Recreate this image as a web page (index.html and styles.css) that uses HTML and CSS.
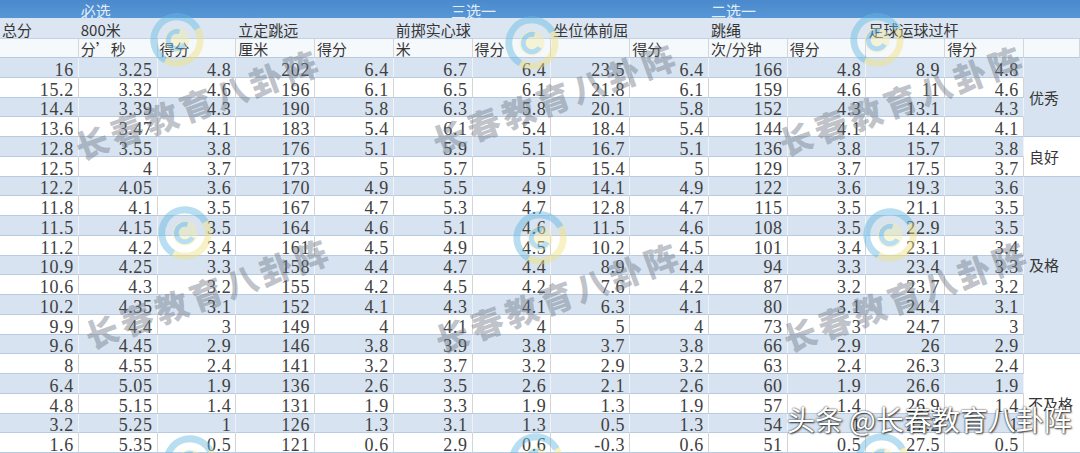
FILE: index.html
```html
<!DOCTYPE html>
<html lang="zh">
<head>
<meta charset="utf-8">
<title>体育评分表</title>
<link rel="stylesheet" href="styles.css">
</head>
<body>
<div class="sheet">
  <div class="grid">
    <div class="hr1">
      <span class="c"></span>
      <span class="c s4">必选</span>
      <span class="c s2 mid">三选一</span>
      <span class="c s2"></span>
      <span class="c s4">二选一</span>
      <span class="c"></span>
    </div>
    <div class="hr2">
      <span class="c">总分</span>
      <span class="c s2">800米</span>
      <span class="c s2">立定跳远</span>
      <span class="c s2">前掷实心球</span>
      <span class="c s2">坐位体前屈</span>
      <span class="c s2">跳绳</span>
      <span class="c s2">足球运球过杆</span>
      <span class="c"></span>
    </div>
    <div class="hr3">
      <span class="c"></span><span class="c">分’秒</span><span class="c">得分</span><span class="c">厘米</span><span class="c">得分</span><span class="c">米</span><span class="c">得分</span><span class="c"></span><span class="c">得分</span><span class="c">次/分钟</span><span class="c">得分</span><span class="c"></span><span class="c">得分</span><span class="c"></span>
    </div>

    <div class="rate b ex">优秀</div>
    <div class="rate w gd">良好</div>
    <div class="rate b pa">及格</div>
    <div class="rate w fa">不及格</div>

    <div class="r b"><span>16</span><span>3.25</span><span>4.8</span><span>202</span><span>6.4</span><span>6.7</span><span>6.4</span><span>23.5</span><span>6.4</span><span>166</span><span>4.8</span><span>8.9</span><span>4.8</span></div>
    <div class="r w"><span>15.2</span><span>3.32</span><span>4.6</span><span>196</span><span>6.1</span><span>6.5</span><span>6.1</span><span>21.8</span><span>6.1</span><span>159</span><span>4.6</span><span>11</span><span>4.6</span></div>
    <div class="r b"><span>14.4</span><span>3.39</span><span>4.3</span><span>190</span><span>5.8</span><span>6.3</span><span>5.8</span><span>20.1</span><span>5.8</span><span>152</span><span>4.3</span><span>13.1</span><span>4.3</span></div>
    <div class="r w"><span>13.6</span><span>3.47</span><span>4.1</span><span>183</span><span>5.4</span><span>6.1</span><span>5.4</span><span>18.4</span><span>5.4</span><span>144</span><span>4.1</span><span>14.4</span><span>4.1</span></div>
    <div class="r b"><span>12.8</span><span>3.55</span><span>3.8</span><span>176</span><span>5.1</span><span>5.9</span><span>5.1</span><span>16.7</span><span>5.1</span><span>136</span><span>3.8</span><span>15.7</span><span>3.8</span></div>
    <div class="r w"><span>12.5</span><span>4</span><span>3.7</span><span>173</span><span>5</span><span>5.7</span><span>5</span><span>15.4</span><span>5</span><span>129</span><span>3.7</span><span>17.5</span><span>3.7</span></div>
    <div class="r b"><span>12.2</span><span>4.05</span><span>3.6</span><span>170</span><span>4.9</span><span>5.5</span><span>4.9</span><span>14.1</span><span>4.9</span><span>122</span><span>3.6</span><span>19.3</span><span>3.6</span></div>
    <div class="r w"><span>11.8</span><span>4.1</span><span>3.5</span><span>167</span><span>4.7</span><span>5.3</span><span>4.7</span><span>12.8</span><span>4.7</span><span>115</span><span>3.5</span><span>21.1</span><span>3.5</span></div>
    <div class="r b"><span>11.5</span><span>4.15</span><span>3.5</span><span>164</span><span>4.6</span><span>5.1</span><span>4.6</span><span>11.5</span><span>4.6</span><span>108</span><span>3.5</span><span>22.9</span><span>3.5</span></div>
    <div class="r w"><span>11.2</span><span>4.2</span><span>3.4</span><span>161</span><span>4.5</span><span>4.9</span><span>4.5</span><span>10.2</span><span>4.5</span><span>101</span><span>3.4</span><span>23.1</span><span>3.4</span></div>
    <div class="r b"><span>10.9</span><span>4.25</span><span>3.3</span><span>158</span><span>4.4</span><span>4.7</span><span>4.4</span><span>8.9</span><span>4.4</span><span>94</span><span>3.3</span><span>23.4</span><span>3.3</span></div>
    <div class="r w"><span>10.6</span><span>4.3</span><span>3.2</span><span>155</span><span>4.2</span><span>4.5</span><span>4.2</span><span>7.6</span><span>4.2</span><span>87</span><span>3.2</span><span>23.7</span><span>3.2</span></div>
    <div class="r b"><span>10.2</span><span>4.35</span><span>3.1</span><span>152</span><span>4.1</span><span>4.3</span><span>4.1</span><span>6.3</span><span>4.1</span><span>80</span><span>3.1</span><span>24.4</span><span>3.1</span></div>
    <div class="r w"><span>9.9</span><span>4.4</span><span>3</span><span>149</span><span>4</span><span>4.1</span><span>4</span><span>5</span><span>4</span><span>73</span><span>3</span><span>24.7</span><span>3</span></div>
    <div class="r b"><span>9.6</span><span>4.45</span><span>2.9</span><span>146</span><span>3.8</span><span>3.9</span><span>3.8</span><span>3.7</span><span>3.8</span><span>66</span><span>2.9</span><span>26</span><span>2.9</span></div>
    <div class="r w"><span>8</span><span>4.55</span><span>2.4</span><span>141</span><span>3.2</span><span>3.7</span><span>3.2</span><span>2.9</span><span>3.2</span><span>63</span><span>2.4</span><span>26.3</span><span>2.4</span></div>
    <div class="r b"><span>6.4</span><span>5.05</span><span>1.9</span><span>136</span><span>2.6</span><span>3.5</span><span>2.6</span><span>2.1</span><span>2.6</span><span>60</span><span>1.9</span><span>26.6</span><span>1.9</span></div>
    <div class="r w"><span>4.8</span><span>5.15</span><span>1.4</span><span>131</span><span>1.9</span><span>3.3</span><span>1.9</span><span>1.3</span><span>1.9</span><span>57</span><span>1.4</span><span>26.9</span><span>1.4</span></div>
    <div class="r b"><span>3.2</span><span>5.25</span><span>1</span><span>126</span><span>1.3</span><span>3.1</span><span>1.3</span><span>0.5</span><span>1.3</span><span>54</span><span>1</span><span>27.2</span><span>1</span></div>
    <div class="r w"><span>1.6</span><span>5.35</span><span>0.5</span><span>121</span><span>0.6</span><span>2.9</span><span>0.6</span><span>-0.3</span><span>0.6</span><span>51</span><span>0.5</span><span>27.5</span><span>0.5</span></div>
  </div>

  <div class="wm" aria-hidden="true">
    <svg class="logo l1" viewBox="0 0 60 60"><circle cx="30" cy="30" r="24" class="ry"/><circle cx="30" cy="30" r="24" class="rb"/><circle cx="30" cy="30" r="13" class="fy"/><circle cx="30" cy="30" r="9" class="cb"/></svg>
    <svg class="logo l2" viewBox="0 0 60 60"><circle cx="30" cy="30" r="24" class="ry"/><circle cx="30" cy="30" r="24" class="rb"/><circle cx="30" cy="30" r="13" class="fy"/><circle cx="30" cy="30" r="9" class="cb"/></svg>
    <svg class="logo l3" viewBox="0 0 60 60"><circle cx="30" cy="30" r="24" class="ry"/><circle cx="30" cy="30" r="24" class="rb"/><circle cx="30" cy="30" r="13" class="fy"/><circle cx="30" cy="30" r="9" class="cb"/></svg>
    <svg class="logo l4" viewBox="0 0 60 60"><circle cx="30" cy="30" r="24" class="ry"/><circle cx="30" cy="30" r="24" class="rb"/><circle cx="30" cy="30" r="13" class="fy"/><circle cx="30" cy="30" r="9" class="cb"/></svg>
    <svg class="logo l5" viewBox="0 0 60 60"><circle cx="30" cy="30" r="24" class="ry"/><circle cx="30" cy="30" r="24" class="rb"/><circle cx="30" cy="30" r="13" class="fy"/><circle cx="30" cy="30" r="9" class="cb"/></svg>
    <svg class="logo l6" viewBox="0 0 60 60"><circle cx="30" cy="30" r="24" class="ry"/><circle cx="30" cy="30" r="24" class="rb"/><circle cx="30" cy="30" r="13" class="fy"/><circle cx="30" cy="30" r="9" class="cb"/></svg>
    <svg class="logo l7" viewBox="0 0 60 60"><circle cx="30" cy="30" r="24" class="ry"/><circle cx="30" cy="30" r="24" class="rb"/><circle cx="30" cy="30" r="13" class="fy"/><circle cx="30" cy="30" r="9" class="cb"/></svg>
    <svg class="logo l8" viewBox="0 0 60 60"><circle cx="30" cy="30" r="24" class="ry"/><circle cx="30" cy="30" r="24" class="rb"/><circle cx="30" cy="30" r="13" class="fy"/><circle cx="30" cy="30" r="9" class="cb"/></svg>
    <svg class="logo l9" viewBox="0 0 60 60"><circle cx="30" cy="30" r="24" class="ry"/><circle cx="30" cy="30" r="24" class="rb"/><circle cx="30" cy="30" r="13" class="fy"/><circle cx="30" cy="30" r="9" class="cb"/></svg>

    <span class="mark t1">长春教育八卦阵</span>
    <span class="mark t2">长春教育八卦阵</span>
    <span class="mark t3">长春教育八卦阵</span>
    <span class="mark t4">长春教育八卦阵</span>
    <span class="mark t5">长春教育八卦阵</span>
    <span class="mark t6">长春教育八卦阵</span>
  </div>

  <div class="credit">头条 @长春教育八卦阵</div>
</div>
</body>
</html>
```

FILE: styles.css
```css
html, body {
  margin: 0;
  padding: 0;
  background: #ffffff;
}

.sheet {
  position: relative;
  width: 1080px;
  height: 453px;
  overflow: hidden;
  font-family: "Noto Sans CJK SC", "Noto Sans", sans-serif;
  color: #363636;
}

.grid {
  display: grid;
  grid-template-columns: repeat(13, 78.77px) 1fr;
  grid-template-rows: 18px 21px 19px repeat(20, 19.75px);
}

.hr1, .hr2, .hr3, .r {
  display: contents;
}

.c {
  box-sizing: border-box;
  display: flex;
  align-items: flex-end;
  padding: 0 0 1px 2px;
  font-size: 15px;
  line-height: 15px;
  white-space: nowrap;
}

.s2 { grid-column: span 2; }
.s4 { grid-column: span 4; }
.mid { justify-content: center; }

.hr1 .c {
  background: linear-gradient(#4a89cc, #5797d6);
  color: #e3edf8;
  padding-bottom: 0;
}

.hr2 .c {
  background: #dbe6f2;
  border-bottom: 1px solid #c3d3e6;
}

.hr3 .c {
  background: #f6f9fc;
  border-right: 1px solid #d3d6da;
  border-bottom: 1px solid #b8cade;
}

.r span {
  box-sizing: border-box;
  display: flex;
  justify-content: flex-end;
  align-items: flex-end;
  padding-right: 4px;
  font-family: "Liberation Serif", "DejaVu Serif", serif;
  font-size: 18px;
  line-height: 14px;
  letter-spacing: 0.6px;
  color: #404040;
  border-bottom: 1px solid #b9cbe0;
  white-space: nowrap;
}

.r.b span {
  background: #d7e3f1;
  border-right: 1px solid #eef3f9;
}

.r.w span {
  background: #ffffff;
  border-right: 1px solid #d2d4d7;
}

.rate {
  grid-column: 14;
  box-sizing: border-box;
  display: flex;
  align-items: center;
  padding-left: 5px;
  font-size: 15px;
  line-height: 15px;
  color: #363636;
  border-bottom: 1px solid #b9cbe0;
  white-space: nowrap;
}

.rate.b { background: #d7e3f1; }
.rate.w { background: #ffffff; }
.rate.ex { grid-row: 4 / span 4; }
.rate.gd { grid-row: 8 / span 2; }
.rate.pa { grid-row: 10 / span 9; }
.rate.fa { grid-row: 19 / span 5; padding-left: 4px; }

/* watermark overlay */
.wm {
  position: absolute;
  inset: 0;
  pointer-events: none;
}

.logo {
  position: absolute;
  width: 58px;
  height: 58px;
  margin: -29px 0 0 -29px;
  opacity: 0.45;
}

.logo .ry { fill: none; stroke: #f1e17c; stroke-width: 7; }
.logo .rb { fill: none; stroke: #62b8e4; stroke-width: 7; stroke-dasharray: 88 63; transform: rotate(120deg); transform-origin: 30px 30px; }
.logo .fy { fill: #f5eda6; }
.logo .cb { fill: none; stroke: #62b8e4; stroke-width: 5; stroke-dasharray: 40 17; transform: rotate(30deg); transform-origin: 30px 30px; }

.l1 { left: 177px; top: 40px; }
.l2 { left: 532px; top: 43px; }
.l3 { left: 877px; top: 40px; }
.l4 { left: 185px; top: 233px; }
.l5 { left: 540px; top: 238px; }
.l6 { left: 890px; top: 235px; }
.l7 { left: 190px; top: 462px; }
.l8 { left: 536px; top: 460px; }
.l9 { left: 882px; top: 460px; }

.mark {
  position: absolute;
  transform: translate(-50%, -50%) rotate(-20deg);
  font-family: "Noto Sans CJK SC", sans-serif;
  font-weight: 900;
  font-size: 33px;
  line-height: 1;
  letter-spacing: 4px;
  color: rgba(112, 122, 134, 0.45);
  white-space: nowrap;
}

.t1 { left: 198px; top: 104px; }
.t2 { left: 555px; top: 98px; }
.t3 { left: 902px; top: 100px; }
.t4 { left: 208px; top: 293px; }
.t5 { left: 558px; top: 297px; }
.t6 { left: 906px; top: 296px; }

.credit {
  position: absolute;
  left: 787px;
  top: 404px;
  font-family: "Noto Sans CJK SC", sans-serif;
  font-size: 28px;
  line-height: 1.1;
  color: #ffffff;
  white-space: nowrap;
  text-shadow: 0 0 2px rgba(0, 0, 0, 0.85), 1px 1px 2px rgba(0, 0, 0, 0.7);
}
```
